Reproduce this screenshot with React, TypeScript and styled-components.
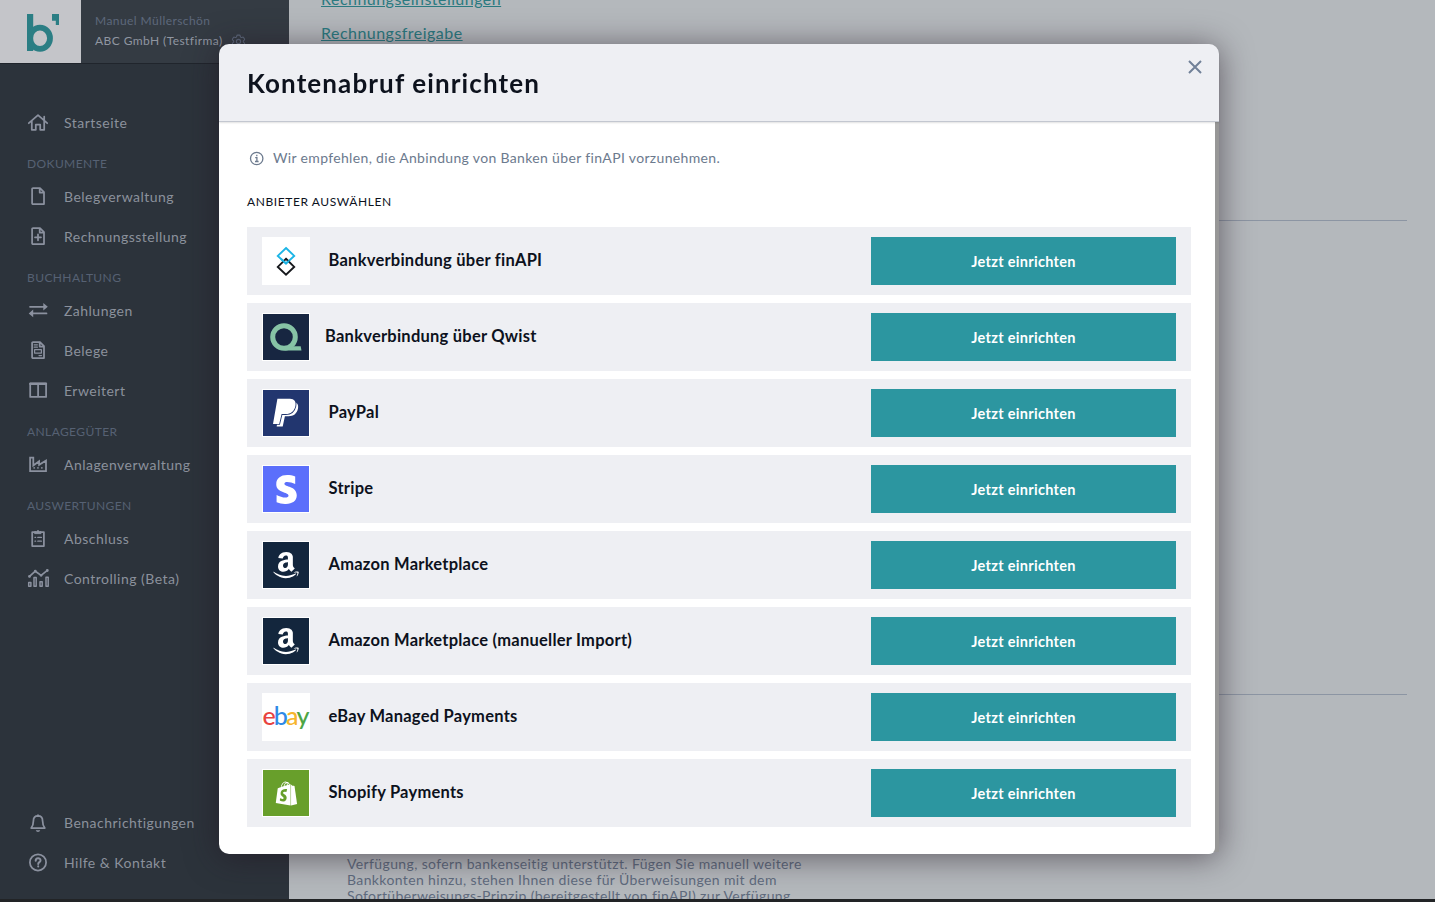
import React from "react";
import styled, { createGlobalStyle } from "styled-components";
import { FaAmazon, FaShopify, FaStripeS } from "react-icons/fa";
import { HiOutlineCog6Tooth } from "react-icons/hi2";

const GlobalStyle = createGlobalStyle`
  *, *::before, *::after { box-sizing: border-box; }
  body { margin: 0; overflow: hidden; font-family: Lato, "Liberation Sans", sans-serif; }
`;

const Page = styled.div`
  display: flex;
  height: 902px;
  background: #b4b8bc;
  border-bottom: 3px solid #222426;
  overflow: hidden;
`;

const Sidebar = styled.aside`
  display: flex;
  flex-direction: column;
  flex: 0 0 289px;
  background: #2c333b;
`;

const CompanyBar = styled.header`
  display: flex;
  height: 64px;
  background: #343b43;
  border-bottom: 1px solid #20252c;
`;

const LogoTile = styled.div`
  width: 81px;
  height: 63px;
  background: #c4c5c9;
  svg { display: block; }
`;

const CompanyText = styled.div`
  display: flex;
  flex-direction: column;
  padding: 11px 0 0 14px;
  font-size: 12px;
  line-height: 20px;
  letter-spacing: 0.43px;
  white-space: nowrap;
`;

const UserName = styled.span`
  color: #5d687b;
`;

const CompanyName = styled.span`
  display: flex;
  align-items: center;
  gap: 7px;
  color: #9096a1;
  letter-spacing: 0.42px;
  svg { flex: none; color: #5d687b; }
`;

const Nav = styled.nav`
  padding-top: 39px;
`;

const FooterNav = styled.nav`
  margin-top: auto;
  padding-bottom: 16px;
`;

const NavItem = styled.a`
  display: flex;
  align-items: center;
  gap: 15px;
  height: 40px;
  padding-left: 27px;
  color: #8b919c;
  font-size: 14px;
  letter-spacing: 0.48px;
  white-space: nowrap;
`;

const NavLabel = styled.span`
  padding-bottom: 2px;
`;

const NavIcon = styled.svg`
  flex: none;
  width: 22px;
  height: 22px;
  fill: none;
  stroke: #8b919f;
  stroke-width: 1.75;
  stroke-linejoin: round;
  stroke-linecap: round;
`;

const NavHeading = styled.h3`
  margin: 0;
  height: 34px;
  padding: 13px 0 0 27px;
  color: #566173;
  font-size: 12px;
  font-weight: 400;
  line-height: 16px;
  letter-spacing: 0.4px;
`;

const Main = styled.main`
  display: flex;
  flex-direction: column;
  flex: 1;
  padding: 0 28px 0 32px;
`;

const SettingsLink = styled.a`
  height: 34px;
  margin-top: -18px;
  color: #2a7a80;
  font-size: 16px;
  line-height: 34px;
  letter-spacing: 0.47px;
  text-decoration: underline;
  & + & { margin-top: 0; }
`;

const Divider = styled.hr<{ $gap: number }>`
  width: 100%;
  margin: ${(p) => p.$gap}px 0 0;
  border: 0;
  border-top: 1px solid #8c95a3;
`;

const Hint = styled.p`
  margin: 161px 0 0 26px;
  color: #5f6b7e;
  font-size: 14px;
  line-height: 16px;
  letter-spacing: 0.37px;
  white-space: nowrap;
`;

const Dialog = styled.section`
  position: fixed;
  left: 219px;
  top: 44px;
  width: 1000px;
  height: 810px;
  display: flex;
  flex-direction: column;
  border-radius: 10px;
  box-shadow: 0 3px 32px rgba(32, 20, 32, 0.58);
`;

const DialogHeader = styled.header`
  display: flex;
  justify-content: space-between;
  flex: none;
  height: 78px;
  padding: 0 17px 0 28px;
  background: #eeeff3;
  border-bottom: 1px solid #c3c7d0;
  border-radius: 10px 10px 0 0;
  box-shadow: 0 1px 2px rgba(0, 0, 0, 0.12);
  z-index: 1;
`;

const Title = styled.h1`
  margin: 0;
  color: #0d121d;
  font-size: 26px;
  font-weight: 700;
  line-height: 78px;
  letter-spacing: 1.12px;
`;

const CloseButton = styled.button`
  width: 14px;
  height: 14px;
  margin-top: 16px;
  padding: 0;
  border: 0;
  background: none;
  svg { display: block; }
`;

const DialogViewport = styled.div`
  display: flex;
  flex: 1;
  background: linear-gradient(#979797, #979797) right top / 14px 730px no-repeat;
`;

const DialogBody = styled.div`
  width: 996px;
  padding: 26px 24px 0 28px;
  background: #fff;
  border-radius: 0 0 6px 10px;
`;

const Notice = styled.div`
  display: flex;
  align-items: center;
  gap: 8px;
  height: 20px;
  padding-left: 2px;
  color: #6c7a8e;
  font-size: 14px;
  letter-spacing: 0.34px;
`;

const NoticeText = styled.span`
  padding-bottom: 2px;
`;

const ListHeading = styled.h2`
  margin: 26px 0 17px;
  color: #0d121d;
  font-size: 12px;
  font-weight: 400;
  line-height: 16px;
  letter-spacing: 0.58px;
`;

const ProviderList = styled.div`
  display: flex;
  flex-direction: column;
  gap: 8px;
`;

const ProviderRow = styled.div`
  display: flex;
  align-items: center;
  height: 68px;
  padding: 0 15px;
  background: #eeeff3;
`;

const Badge = styled.div<{ $color: string }>`
  display: flex;
  align-items: center;
  justify-content: center;
  width: 48px;
  height: 48px;
  border: 1px solid #fff;
  background: ${(p) => p.$color};
  color: #fff;
`;

const ProviderName = styled.span<{ $near?: boolean }>`
  flex: 1;
  padding: 0 0 2px ${(p) => (p.$near ? 15 : 18.5)}px;
  color: #0d121d;
  font-size: 16.5px;
  font-weight: 700;
  letter-spacing: 0.24px;
`;

const SetupButton = styled.button`
  width: 305px;
  height: 48px;
  padding: 0;
  border: 0;
  background: #2c96a0;
  color: #fff;
  font: 700 14.5px Lato, "Liberation Sans", sans-serif;
  letter-spacing: 0.3px;
`;

const EbayMark = styled.span`
  display: flex;
  margin: -5px 0 0 -2px;
  font-size: 25px;
  font-weight: 500;
  line-height: 24px;
  letter-spacing: -1.9px;
`;

const Tint = styled.span<{ $color: string }>`
  color: ${(p) => p.$color};
`;

const icons: Record<string, React.ReactNode> = {
  home: (
    <path d="M1.8 11.2 11 3.2l9.2 8M4.8 9v8.8h4v-5.3h4.4v5.3h4V9M17.2 8V4.6" />
  ),
  file: (
    <path d="M6 2.2h7l4 4v11.9H6a.9.9 0 0 1-.9-.9V3.1a.9.9 0 0 1 .9-.9zM12.7 2.4v4.2h4.1" />
  ),
  filePlus: (
    <path d="M6 2.2h7l4 4v11.9H6a.9.9 0 0 1-.9-.9V3.1a.9.9 0 0 1 .9-.9zM12.7 2.4v4.2h4.1M11 8.3v6M8 11.3h6" />
  ),
  transfer: (
    <>
      <path d="M3 6.8h14M19.5 13.4H5" />
      <path d="M16.3 3v7.6l4.5-3.8zM6.2 9.6v7.6l-4.5-3.8z" fill="#8b919f" stroke="none" />
    </>
  ),
  receipt: (
    <>
      <path d="M6 2.2h7l4 4v11.9H6a.9.9 0 0 1-.9-.9V3.1a.9.9 0 0 1 .9-.9zM12.7 2.4v4.2h4.1" />
      <path d="M7.2 4.8h3.2M7.2 7.2h3.2M7.6 9.7h6.8v3.4H7.6zM12 15.6h2.5" strokeWidth="1.2" />
    </>
  ),
  columns: (
    <>
      <path d="M3.2 3.4h15.9v13.5H3.2zM11.1 4v12.8" />
      <path d="M3.2 3.9h15.9" strokeWidth="2.2" />
    </>
  ),
  factory: (
    <>
      <path d="M3.1 3.5h3.2v8l5.8-4.3v3.6l6.9-4.3v10.6H3.1z" strokeLinejoin="miter" />
      <path d="M6.5 13.8h1.3M10.3 13.8h1.3M14.2 13.8h1.3" strokeLinecap="butt" />
    </>
  ),
  clipboard: (
    <>
      <path d="M8 4.2H5.2v13.9h11.7V4.2H14" />
      <path d="M8 3.6h1.6a1.5 1.5 0 0 1 2.8 0H14v2H8z" fill="#8b919f" strokeWidth="1" />
      <path d="M8 9.4h.6M10.8 9.4h3.6M8 13.2h.6M10.8 13.2h3.6" strokeWidth="1.3" />
    </>
  ),
  chart: (
    <>
      <path d="M1.7 14.5h2.2v3.8H1.7zM7 9.6h2.2v8.7H7zM13 13.8h2.2v4.5H13zM19 9.2h2.2v9.1H19z" strokeWidth="1.5" />
      <path d="m2.5 8.4 5.8-5.2 5.8 4.2 6.2-5" />
      <path d="M2.5 8.4h.01M8.3 3.2h.01M14.1 7.3h.01M20.3 2.5h.01" strokeWidth="2.8" />
    </>
  ),
  bell: (
    <>
      <path d="M11 3.9c-3.2 0-4.6 2.3-4.6 5 0 4-1 5.5-2.2 7.1h13.6c-1.2-1.6-2.2-3.1-2.2-7.1 0-2.7-1.4-5-4.6-5zM11 3v.5" />
      <path d="M8.8 18.2h4.4c-.5 2.3-3.9 2.3-4.4 0z" fill="#8b919f" stroke="none" />
    </>
  ),
  help: (
    <>
      <circle cx="11" cy="10.4" r="8.1" />
      <path d="M8.7 8.7c0-3.2 4.8-3.1 4.8-.3 0 1.7-2.3 1.8-2.3 3.6M11.2 14.3v.2" strokeWidth="2" />
    </>
  ),
};

const navGroups = [
  { items: [["home", "Startseite"]] },
  { title: "DOKUMENTE", items: [["file", "Belegverwaltung"], ["filePlus", "Rechnungsstellung"]] },
  { title: "BUCHHALTUNG", items: [["transfer", "Zahlungen"], ["receipt", "Belege"], ["columns", "Erweitert"]] },
  { title: "ANLAGEGÜTER", items: [["factory", "Anlagenverwaltung"]] },
  { title: "AUSWERTUNGEN", items: [["clipboard", "Abschluss"], ["chart", "Controlling (Beta)"]] },
];

const Entry = ({ icon, label }: { icon: string; label: string }) => (
  <NavItem>
    <NavIcon viewBox="0 0 22 22">{icons[icon]}</NavIcon>
    <NavLabel>{label}</NavLabel>
  </NavItem>
);

const FinApiLogo = () => (
  <svg width="46" height="46" viewBox="0 0 46 46" fill="none" strokeWidth="1.9">
    <path d="m23 10 8.2 7.9-8.2 7.6-8.2-7.6z" stroke="#1cb5e6" />
    <path d="m23 20.8 8.2 8.1-8.2 7.9-8.2-7.9z" stroke="#16181c" />
    <path d="m18 21 5 4.5 3-2.7" stroke="#1cb5e6" />
  </svg>
);

const QwistLogo = () => (
  <svg width="46" height="46" viewBox="0 0 46 46" fill="none" stroke="#86c3a5" strokeWidth="5">
    <circle cx="21" cy="23" r="11.3" />
    <path d="M21 36.5h17.5l-.8-4.3h-6.7z" fill="#86c3a5" stroke="none" />
  </svg>
);

const PayPalLogo = () => (
  <svg width="46" height="46" viewBox="0 0 46 46" fill="#fff">
    <path d="M17 12h13c4 0 5.8 2.6 5 6.5-1.2 5.5-4.6 7.7-9.5 7.7h-3.6l-2.2 10.4h-6z" />
    <path
      d="M14.4 8.8H27c4.3 0 6.3 3 5.4 7.2-1.2 5.5-4.7 8-9.6 8h-4.2l-2.4 9.9H10z"
      stroke="#22366f"
      strokeWidth="1.8"
      paintOrder="stroke"
    />
  </svg>
);

const EbayLogo = () => (
  <EbayMark>
    <Tint $color="#e8433f">e</Tint>
    <Tint $color="#2e8ae6">b</Tint>
    <Tint $color="#f7b52c">a</Tint>
    <Tint $color="#4ea544">y</Tint>
  </EbayMark>
);

const providers = [
  { name: "Bankverbindung über finAPI", color: "#fff", logo: <FinApiLogo /> },
  { name: "Bankverbindung über Qwist", color: "#172641", logo: <QwistLogo />, near: true },
  { name: "PayPal", color: "#22366f", logo: <PayPalLogo /> },
  { name: "Stripe", color: "#5b6ffb", logo: <FaStripeS size={29} /> },
  { name: "Amazon Marketplace", color: "#13263d", logo: <FaAmazon size={30} /> },
  { name: "Amazon Marketplace (manueller Import)", color: "#13263d", logo: <FaAmazon size={30} /> },
  { name: "eBay Managed Payments", color: "#fff", logo: <EbayLogo /> },
  { name: "Shopify Payments", color: "#689f2b", logo: <FaShopify size={25} /> },
];

export default function App() {
  return (
    <>
      <GlobalStyle />
      <Page>
        <Sidebar>
          <CompanyBar>
            <LogoTile>
              <svg width="81" height="63" viewBox="0 0 81 63" fill="none">
                <path d="M27 14h6.2v37H27zM52 14h7v11h-3.2v-4.2H52z" fill="#2b7e84" />
                <ellipse cx="40" cy="38.3" rx="10" ry="10.6" stroke="#2b7e84" strokeWidth="5.8" />
              </svg>
            </LogoTile>
            <CompanyText>
              <UserName>Manuel Müllerschön</UserName>
              <CompanyName>
                ABC GmbH (Testfirma)
                <HiOutlineCog6Tooth size={17} />
              </CompanyName>
            </CompanyText>
          </CompanyBar>
          <Nav>
            {navGroups.map((group, i) => (
              <React.Fragment key={i}>
                {group.title && <NavHeading>{group.title}</NavHeading>}
                {group.items.map(([icon, label]) => (
                  <Entry key={label} icon={icon} label={label} />
                ))}
              </React.Fragment>
            ))}
          </Nav>
          <FooterNav>
            <Entry icon="bell" label="Benachrichtigungen" />
            <Entry icon="help" label="Hilfe & Kontakt" />
          </FooterNav>
        </Sidebar>
        <Main>
          <SettingsLink>Rechnungseinstellungen</SettingsLink>
          <SettingsLink>Rechnungsfreigabe</SettingsLink>
          <Divider $gap={170} />
          <Divider $gap={473} />
          <Hint>
            Verfügung, sofern bankenseitig unterstützt. Fügen Sie manuell weitere
            <br />
            Bankkonten hinzu, stehen Ihnen diese für Überweisungen mit dem
            <br />
            Sofortüberweisungs-Prinzip (bereitgestellt von finAPI) zur Verfügung.
          </Hint>
        </Main>
      </Page>
      <Dialog role="dialog" aria-modal="true">
        <DialogHeader>
          <Title>Kontenabruf einrichten</Title>
          <CloseButton aria-label="Schließen">
            <svg width="14" height="14" viewBox="0 0 14 14" stroke="#718198" strokeWidth="2">
              <path d="m1 1 12 12M13 1 1 13" />
            </svg>
          </CloseButton>
        </DialogHeader>
        <DialogViewport>
          <DialogBody>
            <Notice>
              <svg width="16" height="16" viewBox="0 0 16 16" fill="none" stroke="#6c7a8e" strokeWidth="1.3">
                <circle cx="7.7" cy="8.5" r="6.2" />
                <path d="M6.2 7.6h1.7v3.7M6 11.5h3.6M7.8 4.8v1.4" />
              </svg>
              <NoticeText>Wir empfehlen, die Anbindung von Banken über finAPI vorzunehmen.</NoticeText>
            </Notice>
            <ListHeading>ANBIETER AUSWÄHLEN</ListHeading>
            <ProviderList>
              {providers.map((p) => (
                <ProviderRow key={p.name}>
                  <Badge $color={p.color}>{p.logo}</Badge>
                  <ProviderName $near={p.near}>{p.name}</ProviderName>
                  <SetupButton>Jetzt einrichten</SetupButton>
                </ProviderRow>
              ))}
            </ProviderList>
          </DialogBody>
        </DialogViewport>
      </Dialog>
    </>
  );
}
